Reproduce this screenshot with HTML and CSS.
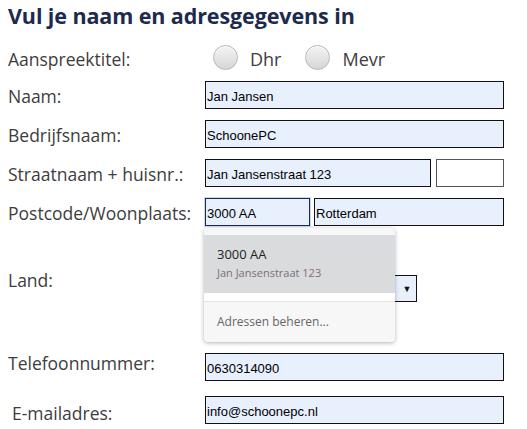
FILE: index.html
```html
<!DOCTYPE html>
<html lang="nl">
<head>
  <meta charset="UTF-8">
  <title>Adresgegevens</title>
  <link rel="stylesheet" href="styles.css">
</head>
<body>
  <h1 class="title">Vul je naam en adresgegevens in</h1>

  <form class="address-form">
    <!-- Aanspreektitel -->
    <div class="row row-radio">
      <label class="lbl">Aanspreektitel:</label>
      <div class="radios">
        <label class="radio"><span class="dot"></span>Dhr</label>
        <label class="radio"><span class="dot"></span>Mevr</label>
      </div>
    </div>

    <div class="row">
      <label class="lbl" for="naam">Naam:</label>
      <input class="field filled" type="text" id="naam" value="Jan Jansen">
    </div>

    <div class="row">
      <label class="lbl" for="bedrijf">Bedrijfsnaam:</label>
      <input class="field filled" type="text" id="bedrijf" value="SchoonePC">
    </div>

    <div class="row">
      <label class="lbl" for="straat">Straatnaam + huisnr.:</label>
      <div class="pair">
        <input class="field filled street" type="text" id="straat" value="Jan Jansenstraat 123">
        <input class="field empty nr" type="text" id="huisnr">
      </div>
    </div>

    <!-- Postcode with the autofill popup -->
    <div class="row">
      <label class="lbl" for="postcode">Postcode/Woonplaats:</label>
      <div class="pair pair-gap">
        <div class="pc-wrap">
          <input class="field filled focused postcode" type="text" id="postcode" value="3000 AA">
          <div class="suggest">
            <div class="suggest-item">
              <div class="s-main">3000 AA</div>
              <div class="s-sub">Jan Jansenstraat 123</div>
            </div>
            <div class="suggest-foot">Adressen beheren...</div>
          </div>
        </div>
        <input class="field filled city" type="text" id="plaats" value="Rotterdam">
      </div>
    </div>

    <div class="row row-land">
      <label class="lbl lbl-land" for="land">Land:</label>
      <div class="select-box"><span class="arrow">&#9660;</span></div>
    </div>

    <div class="row row-tel">
      <label class="lbl lbl-tel" for="tel">Telefoonnummer:</label>
      <input class="field filled" type="text" id="tel" value="0630314090">
    </div>

    <div class="row row-mail">
      <label class="lbl lbl-mail" for="mail">E-mailadres:</label>
      <input class="field filled" type="text" id="mail" value="info@schoonepc.nl">
    </div>
  </form>
</body>
</html>
```

FILE: styles.css
```css
body {
  margin: 0;
  padding: 0 8px;
  font-family: "Open Sans", sans-serif;
  color: #3d3d3d;
}
.title {
  margin: 2px 0 0;
  font-size: 21.5px;
  font-weight: bold;
  color: #1d2a4d;
  line-height: 28px;
  letter-spacing: -0.1px;
}
.address-form {
  width: 496px;
  margin-top: 14px;
}
.row {
  display: grid;
  grid-template-columns: 197px 1fr;
  align-items: center;
  height: 28px;
  margin-bottom: 11px;
}
.lbl {
  font-size: 17.5px;
  line-height: 22px;
  color: #3d3d3d;
  white-space: nowrap;
  padding-top: 2px;
}
.row-radio {
  height: 28px;
  margin-bottom: 9px;
}
.radios {
  display: flex;
  align-items: center;
  padding-left: 8px;
  gap: 24px;
}
.radio {
  display: flex;
  align-items: center;
  font-size: 18px;
  color: #3d3d3d;
  padding-top: 2px;
}
.dot {
  width: 23px;
  height: 23px;
  border-radius: 50%;
  border: 1px solid #b4b8b4;
  background: linear-gradient(#f4f4f4, #d6d6d6);
  box-shadow: inset 0 1px 1px #fff;
  margin-right: 12px;
  margin-top: -4px;
}
.field {
  box-sizing: border-box;
  height: 28px;
  width: 100%;
  margin: 0;
  padding: 3px 1px 0;
  font-family: "Liberation Sans", Arial, sans-serif;
  font-size: 13px;
  color: #000;
  border: 1px solid #111;
  outline: none;
}
.filled {
  background: #e8f0fe;
}
.empty {
  background: #fff;
  border-color: #555;
}
.focused {
  border-color: #1d2a4d;
  box-shadow: 0 0 0 1px #c7d8f4;
}
.pair {
  display: flex;
  gap: 5px;
}
.pair-gap {
  gap: 4px;
}
.street {
  width: 226px;
}
.nr {
  flex: 1;
}
.pc-wrap {
  position: relative;
  width: 105px;
}
.postcode {
  width: 105px;
}
.city {
  flex: 1;
}
/* autofill popup, lies over the Land row */
.suggest {
  position: absolute;
  left: -1px;
  top: 30px;
  width: 191px;
  height: 114px;
  background: #f7f7f7;
  border-radius: 4px;
  box-shadow: 0 1px 4px rgba(0, 0, 0, 0.3);
  font-family: "Open Sans", sans-serif;
  z-index: 2;
  overflow: hidden;
}
.suggest-item {
  background: #dadbdc;
  margin-top: 7px;
  padding: 11px 0 0 13px;
  box-sizing: border-box;
  border-bottom: 8px solid #fff;
  height: 66px;
}
.s-main {
  font-size: 13px;
  color: #222;
  line-height: 16px;
}
.s-sub {
  font-size: 11px;
  color: #7a6f78;
  margin-top: 4px;
  line-height: 14px;
}
.suggest-foot {
  border-top: 1px solid #e4e4e4;
  padding: 12px 0 0 13px;
  font-size: 12px;
  color: #666;
  line-height: 16px;
}
.row-land {
  height: 66px;
  margin-bottom: 50px;
  align-items: start;
}
.lbl-land {
  padding-top: 32px;
}
.select-box {
  margin-top: 38px;
  width: 212px;
  height: 27px;
  box-sizing: border-box;
  border: 1px solid #111;
  background: #e8f0fe;
  display: flex;
  justify-content: flex-end;
  align-items: center;
}
.arrow {
  font-size: 9px;
  color: #111;
  width: 18px;
  text-align: center;
}
.row-tel {
  margin-bottom: 14px;
}
.lbl-tel {
  padding-top: 0;
  margin-top: -8px;
}
.lbl-mail {
  padding-left: 4px;
  margin-top: 5px;
}
```
